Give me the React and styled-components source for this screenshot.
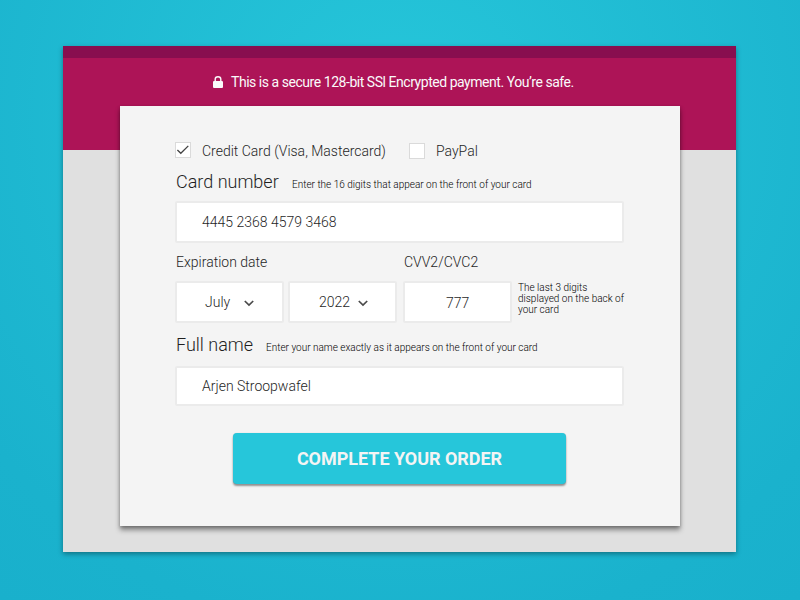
import React from "react";
import styled, { createGlobalStyle } from "styled-components";

const GlobalStyle = createGlobalStyle`
  *, *::before, *::after { box-sizing: border-box; }
  body {
    margin: 0;
    font-family: Roboto, "Liberation Sans", sans-serif;
    color: #1f1f1f;
  }
`;

const Page = styled.div`
  width: 800px;
  height: 600px;
  padding: 46px 63px 0;
  overflow: hidden;
  background: radial-gradient(circle at 400px 120px, #26c6da 0%, #1ab2cd 520px, #19b0cc 100%);
`;

const Panel = styled.main`
  width: 673px;
  height: 506px;
  background: linear-gradient(#880e4f 12px, #ad1457 12px, #ad1457 104px, #e0e0e0 104px);
  box-shadow: 0 2px 5px rgba(0, 0, 0, 0.36);
  padding: 12px 57px 0 57px;
`;

const SecureNotice = styled.header`
  display: flex;
  align-items: center;
  height: 48px;
  padding: 0 0 0 93px;
  color: #fafafa;
  font-size: 14px;
  letter-spacing: -0.46px;
  white-space: nowrap;

  svg { margin: 0 8px 0 0; flex: none; }
`;

const Card = styled.form`
  width: 560px;
  height: 420px;
  margin: 0;
  padding: 36px 56px 0 55px;
  background: #f4f4f4;
  box-shadow: 0 4px 5px rgba(0, 0, 0, 0.42), 0 1px 3px rgba(0, 0, 0, 0.2);
`;

const Methods = styled.div`
  display: flex;
  height: 18px;
`;

const Method = styled.label`
  display: flex;
  align-items: flex-start;
  width: ${(p) => p.$width};
  font-size: 14px;
  font-weight: 300;
  line-height: 18px;
  white-space: nowrap;
`;

const CheckBox = styled.span`
  display: flex;
  align-items: center;
  justify-content: center;
  width: 16px;
  height: 16px;
  margin: ${(p) => p.$drop || "0"} 11px 0 0;
  border: 1px solid #dadada;
  background: #fff;
`;

const Heading = styled.div`
  display: flex;
  align-items: baseline;
  height: ${(p) => p.$height};
  padding: 10px 0 0 1px;
  white-space: nowrap;
`;

const Title = styled.span`
  width: ${(p) => p.$width};
  font-size: 18px;
  font-weight: 300;
  line-height: 24px;
`;

const Hint = styled.span`
  font-size: 10px;
  font-weight: 300;
  line-height: 11px;
  color: #000;
`;

const Field = styled.div`
  display: flex;
  align-items: center;
  width: ${(p) => p.$width || "449px"};
  height: ${(p) => p.$height || "42px"};
  padding: ${(p) => p.$drop || "0"} 0 0 ${(p) => p.$inset || "25px"};
  border: 2px solid #ebebeb;
  border-radius: 2px;
  background: #fff;
  font-size: 14px;
  font-weight: 300;
  white-space: nowrap;

  svg { margin: 2px 0 0 ${(p) => p.$gap || "0"}; }
`;

const Labels = styled.div`
  display: grid;
  grid-template-columns: 228px auto;
  height: 38px;
  padding: 10px 0 0 1px;
  font-size: 14px;
  font-weight: 300;
  line-height: 18px;
`;

const DateRow = styled.div`
  display: grid;
  grid-template-columns: 109px 109px 109px auto;
  column-gap: 4px;

  & > :nth-child(3) { margin-left: 2px; }
`;

const SideHint = styled(Hint)`
  padding: 1px 0 0 4px;
  white-space: nowrap;
`;

const Submit = styled.button`
  display: block;
  width: 333px;
  height: 51px;
  margin: 27px 0 0 58px;
  padding: 0;
  border: 0;
  border-radius: 4px;
  background: #26c6da;
  box-shadow: 0 2px 2px rgba(0, 0, 0, 0.4), 0 0 1px rgba(0, 0, 0, 0.2);
  color: #f4f4f4;
  font: 700 18px Roboto, "Liberation Sans", sans-serif;
  letter-spacing: -0.03px;
`;

const LockIcon = () => (
  <svg width="10" height="12" viewBox="0 0 10 12">
    <path d="M2.2 6V3.3a2.8 2.5 0 0 1 5.6 0V6" fill="none" stroke="#fafafa" strokeWidth="1.4" />
    <rect x="0" y="4.9" width="10" height="7.1" rx="1.1" fill="#fafafa" />
  </svg>
);

const CheckIcon = () => (
  <svg width="14" height="14" viewBox="0 0 14 14">
    <path d="M1.4 7 4.8 10.3 12.3 2.9" fill="none" stroke="#424242" strokeWidth="1.3" />
  </svg>
);

const ChevronIcon = () => (
  <svg width="10" height="7" viewBox="0 0 10 7">
    <path d="M.8 1 5 5.1 9.2 1" fill="none" stroke="#4a4a4a" strokeWidth="1.7" />
  </svg>
);

export default function App() {
  return (
    <>
      <GlobalStyle />
      <Page>
        <Panel>
          <SecureNotice>
            <LockIcon />
            This is a secure 128-bit SSl Encrypted payment. You’re safe.
          </SecureNotice>
          <Card>
            <Methods>
              <Method $width="234px">
                <CheckBox><CheckIcon /></CheckBox>
                Credit Card (Visa, Mastercard)
              </Method>
              <Method>
                <CheckBox $drop="1px" />
                PayPal
              </Method>
            </Methods>
            <Heading $height="41px">
              <Title $width="116px">Card number</Title>
              <Hint>Enter the 16 digits that appear on the front of your card</Hint>
            </Heading>
            <Field>4445 2368 4579 3468</Field>
            <Labels>
              <span>Expiration date</span>
              <span>CVV2/CVC2</span>
            </Labels>
            <DateRow>
              <Field $width="109px" $inset="28px" $gap="14px">July<ChevronIcon /></Field>
              <Field $width="109px" $inset="29px" $gap="8px">2022<ChevronIcon /></Field>
              <Field $width="109px" $inset="41px" $drop="2px">777</Field>
              <SideHint as="div">
                The last 3 digits<br />displayed on the back of<br />your card
              </SideHint>
            </DateRow>
            <Heading $height="43px">
              <Title $width="90px">Full name</Title>
              <Hint>Enter your name exactly as it appears on the front of your card</Hint>
            </Heading>
            <Field $height="40px">Arjen Stroopwafel</Field>
            <Submit type="button">COMPLETE YOUR ORDER</Submit>
          </Card>
        </Panel>
      </Page>
    </>
  );
}
